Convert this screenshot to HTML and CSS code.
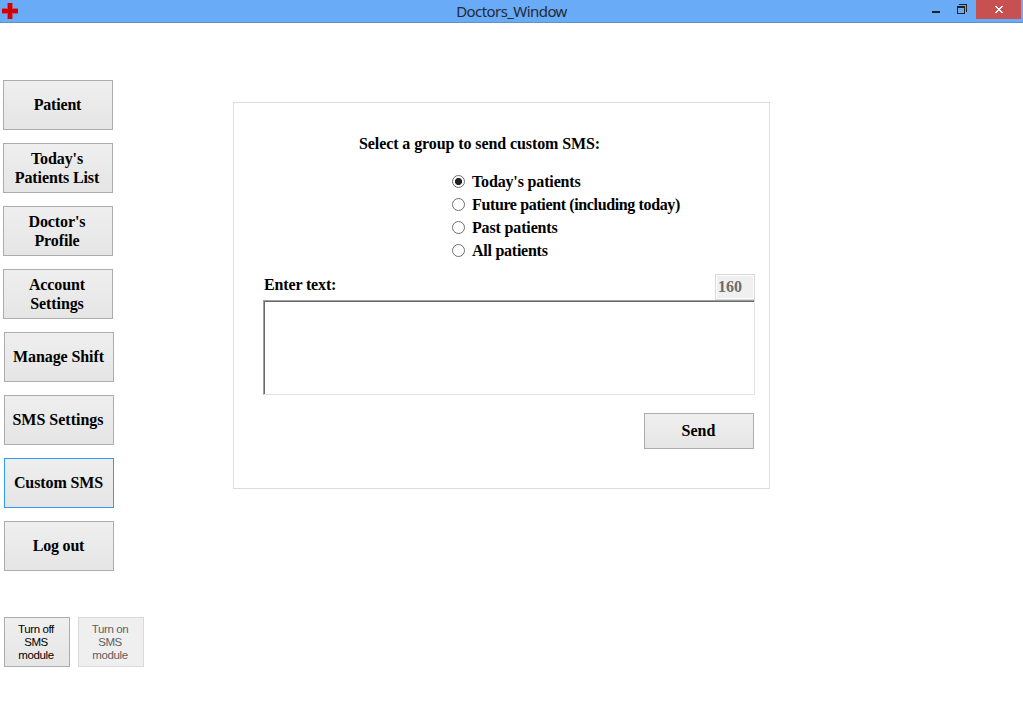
FILE: index.html
```html
<!DOCTYPE html>
<html lang="en">
<head>
<meta charset="utf-8">
<title>Doctors_Window</title>
<link rel="stylesheet" href="styles.css">
</head>
<body>
<header class="titlebar">
  <svg class="app-icon" width="16" height="16" viewBox="0 0 16 16" shape-rendering="crispEdges"><path fill="#ad5a82" d="M5 0h6v5h5v6h-5v5H5v-5H0V5h5z"/><path fill="#d40000" d="M6 0h4v6h6v4h-6v6H6v-6H0V6h6z"/></svg>
  <h1 class="title">Doctors_Window</h1>
  <div class="controls">
    <svg width="75" height="22" viewBox="0 0 75 22" shape-rendering="crispEdges"><path fill="#222" d="M31 11h8v2h-8z"/><path fill="#222" fill-rule="evenodd" d="M56 6h8v8h-8zM57 8v5h6V8zM58 4h8v8h-1V5h-7z"/></svg>
    <button class="close" aria-label="Close"><svg width="8" height="7" viewBox="0 0 8 7" shape-rendering="crispEdges"><path fill="#fff" d="M0 0h2v1h1v1h2V1h1V0h2v1H7v1H6v1H5v1h1v1h1v1h1v1H6V6H5V5H3v1H2v1H0V6h1V5h1V4h1V3H2V2H1V1H0z"/></svg></button>
  </div>
</header>
<main class="workspace">
  <nav class="sidebar">
    <button class="btn nav tight"><span>Patient</span></button>
    <button class="btn nav two-line"><span>Today's<br>Patients List</span></button>
    <button class="btn nav two-line"><span>Doctor's<br>Profile</span></button>
    <button class="btn nav two-line"><span>Account<br>Settings</span></button>
    <button class="btn nav shifted"><span>Manage Shift</span></button>
    <button class="btn nav shifted wide"><span>SMS Settings</span></button>
    <button class="btn nav shifted active"><span>Custom SMS</span></button>
    <button class="btn nav shifted tight"><span>Log out</span></button>
    <div class="module">
      <button class="btn small"><span>Turn off<br>SMS<br>module</span></button>
      <button class="btn small" disabled><span>Turn on<br>SMS<br>module</span></button>
    </div>
  </nav>
  <section class="panel">
    <h2 class="heading">Select a group to send custom SMS:</h2>
    <div class="options">
      <label class="option"><input type="radio" name="group" checked><span>Today's patients</span></label>
      <label class="option long"><input type="radio" name="group"><span>Future patient (including today)</span></label>
      <label class="option"><input type="radio" name="group"><span>Past patients</span></label>
      <label class="option tight"><input type="radio" name="group"><span>All patients</span></label>
    </div>
    <div class="text-row">
      <label class="text-label" for="message">Enter text:</label>
      <output class="counter">160</output>
    </div>
    <textarea class="message" id="message"></textarea>
    <button class="btn send"><span>Send</span></button>
  </section>
</main>
</body>
</html>
```
FILE: styles.css
```css
* { box-sizing: border-box; }
body {
  margin: 0;
  height: 727px;
  overflow: hidden;
  background: #fff;
  color: #000;
  font: bold 16px/19px "Liberation Serif", serif;
}
button { font: inherit; color: inherit; padding: 0; }
.titlebar {
  display: grid;
  grid-template-columns: 122px 1fr 122px;
  height: 23px;
  background: #6aabf7;
  border-bottom: 1px solid #5a93d2;
}
.app-icon { margin: 3px 0 0 2px; }
.title {
  margin: 0;
  text-align: center;
  font: 15px/23px "Noto Sans", sans-serif;
  letter-spacing: -.57px;
  color: #222a35;
}
.controls { display: flex; justify-content: flex-end; padding-right: 2px; }
.close {
  display: flex;
  align-items: center;
  justify-content: center;
  width: 45px;
  height: 19px;
  border: 0;
  background: #c75050;
  padding: 0;
}
.workspace { display: flex; align-items: flex-start; }
.sidebar {
  display: flex;
  flex-direction: column;
  gap: 13px;
  width: 233px;
  padding: 57px 0 0 3px;
}
.btn {
  border: 1px solid #acacac;
  background: linear-gradient(#efefef, #e5e5e5) border-box;
  text-align: center;
}
.nav { width: 110px; height: 50px; padding: 0 1px 2px 0; letter-spacing: -.1px; }
.two-line { padding: 0 2px 1px 0; }
.tight { letter-spacing: -.2px; }
.wide { padding-right: 2px; letter-spacing: 0; }
.shifted { margin-left: 1px; }
.active { border-color: #3399ff; }
.module { display: flex; gap: 8px; margin: 33px 0 0 1px; }
.small {
  width: 66px;
  height: 50px;
  padding-right: 2px;
  font: 11.5px/13px "Liberation Sans", sans-serif;
  letter-spacing: -.4px;
}
.small:disabled { border-color: #d9d9d9; background: #efefef; color: #606060; }
.panel {
  display: flex;
  flex-direction: column;
  width: 537px;
  height: 387px;
  margin-top: 79px;
  padding: 31px 14px 0 29px;
  border: 1px solid #dcdcdc;
}
.heading { margin: 0 0 0 96px; font: inherit; letter-spacing: -.09px; white-space: nowrap; }
.options { margin: 17px 0 0 189px; }
.option { display: flex; align-items: center; gap: 7px; height: 23px; letter-spacing: -.15px; white-space: nowrap; }
.option.long { letter-spacing: -.37px; }
.option.tight { letter-spacing: -.25px; }
.option input {
  appearance: none;
  width: 13px;
  height: 13px;
  margin: 0;
  border: 1px solid #707070;
  border-radius: 50%;
  background: #fff;
}
.option input:checked { background: radial-gradient(circle, #222 3.2px, #fff 3.9px); }
.text-row { display: flex; justify-content: space-between; height: 26px; margin-top: 12px; }
.text-label { margin-left: 1px; line-height: 21px; letter-spacing: -.15px; }
.counter {
  width: 40px;
  height: 26px;
  padding-left: 2px;
  border: 1px solid #d9d9d9;
  background: #f0f0f0;
  box-shadow: inset 0 0 0 1px #fff;
  color: #6d6d6d;
  line-height: 23px;
}
.message {
  display: block;
  width: 492px;
  height: 95px;
  resize: none;
  outline: 0;
  border: 1px solid #e3e3e3;
  border-top-color: #a0a0a0;
  border-left-color: #a0a0a0;
  box-shadow: inset 1px 1px #696969;
  background: #fff;
  font: inherit;
}
.send { align-self: flex-end; width: 110px; height: 36px; margin: 18px 1px 0 0; padding: 0 1px 2px 0; }
```
